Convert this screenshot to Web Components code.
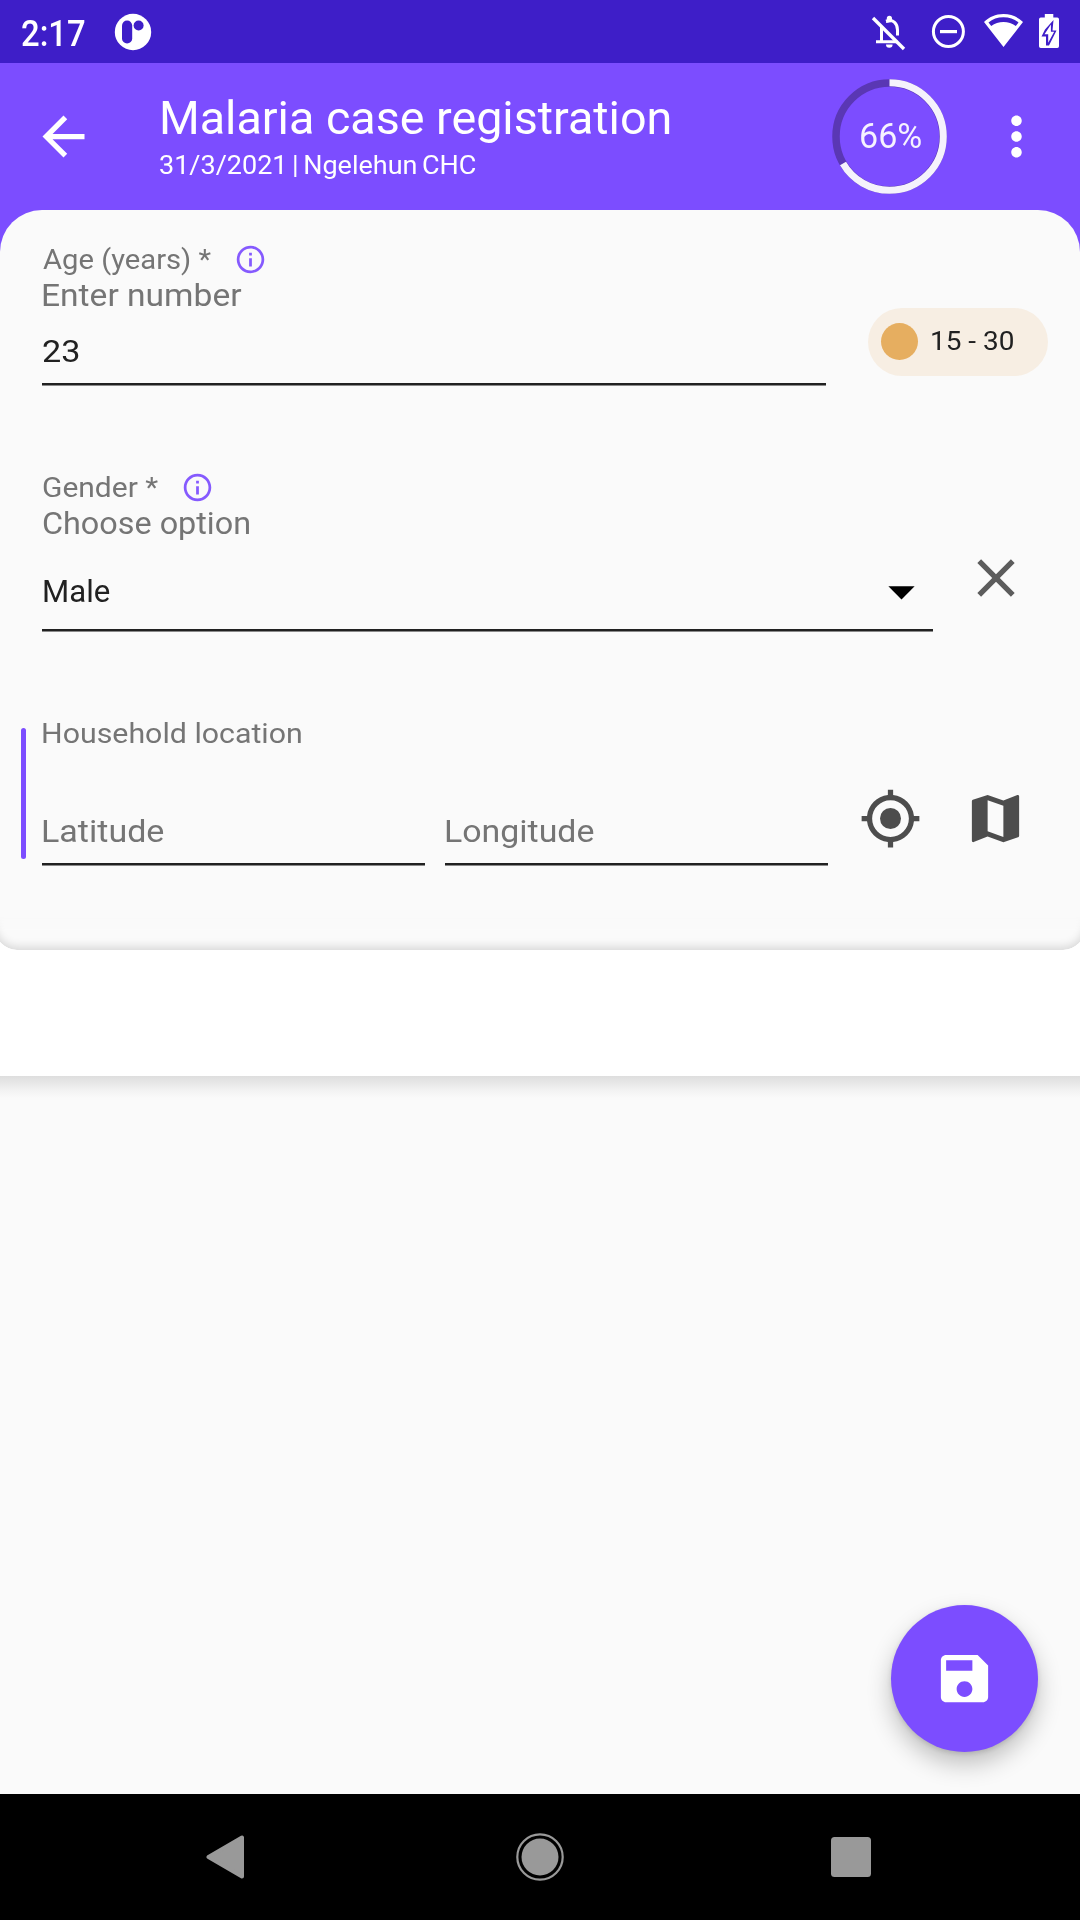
<!DOCTYPE html>
<html lang="en">
<head>
<meta charset="utf-8">
<title>Malaria case registration</title>
<style>
html,body{margin:0;height:100%}
body{font-family:Roboto,"Liberation Sans",sans-serif;color:#212121;background:#fafafa;overflow:hidden}
</style>
</head>
<body>
<capture-app></capture-app>
<script>
const define = (name, markup, setup) => {
  const tpl = document.createElement('template');
  tpl.innerHTML = markup;
  customElements.define(name, class extends HTMLElement {
    connectedCallback() {
      if (this.shadowRoot) return;
      this.attachShadow({mode: 'open'}).append(tpl.content.cloneNode(true));
      if (setup) setup(this, this.shadowRoot);
    }
  });
};

/* One line of text, widened to a given inked width. */
const ruler = document.createElement('canvas').getContext('2d');
define('tracked-text', `<style>:host{display:block;height:36px;line-height:36px;white-space:pre;flex:none}span{display:inline-block;transform-origin:0 50%}</style><span></span>`,
(host, root) => {
  const text = host.getAttribute('text'), span = root.querySelector('span');
  span.textContent = text;
  const cs = getComputedStyle(host);
  ruler.font = `${cs.fontWeight} ${cs.fontSize} ${cs.fontFamily}`;
  const m = ruler.measureText(text);
  const gap = +(host.getAttribute('word-gap') || 0);
  span.style.wordSpacing = gap + 'px';
  const ink = m.actualBoundingBoxRight + m.actualBoundingBoxLeft + gap * (text.split(' ').length - 1);
  const target = +host.getAttribute('span');
  const k = target / ink;
  span.style.transform = `scaleX(${k.toFixed(4)})`;
  span.style.marginLeft = (m.actualBoundingBoxLeft * k * .7) + 'px';
  host.style.width = target + 'px';
});

const icons = {
  back: '<path d="M20 11H7.83l5.59-5.59L12 4l-8 8 8 8 1.41-1.41L7.83 13H20v-2z"/>',
  more: '<path d="M12 8c1.1 0 2-.9 2-2s-.9-2-2-2-2 .9-2 2 .9 2 2 2zm0 2c-1.1 0-2 .9-2 2s.9 2 2 2 2-.9 2-2-.9-2-2-2zm0 6c-1.1 0-2 .9-2 2s.9 2 2 2 2-.9 2-2-.9-2-2-2z"/>',
  info: '<path d="M11 7h2v2h-2zm0 4h2v6h-2zm1-9C6.48 2 2 6.48 2 12s4.48 10 10 10 10-4.48 10-10S17.52 2 12 2zm0 18c-4.41 0-8-3.59-8-8s3.59-8 8-8 8 3.59 8 8-3.59 8-8 8z"/>',
  clear: '<path d="M19 6.41L17.59 5 12 10.59 6.41 5 5 6.41 10.59 12 5 17.59 6.41 19 12 13.41 17.59 19 19 17.59 13.41 12z"/>',
  drop: '<path d="M7 10l5 5 5-5z"/>',
  locate: '<path fill-rule="evenodd" d="M20.94 11c-.46-4.17-3.77-7.48-7.94-7.94V1h-2v2.06C6.83 3.52 3.52 6.83 3.06 11H1v2h2.06c.46 4.17 3.77 7.48 7.94 7.94V23h2v-2.06c4.17-.46 7.48-3.77 7.94-7.94H23v-2h-2.06zM12 19c-3.87 0-7-3.13-7-7s3.13-7 7-7 7 3.13 7 7-3.13 7-7 7z"/><circle cx="12" cy="12" r="4"/>',
  map: '<path d="M20.5 3l-.16.03L15 5.1 9 3 3.36 4.9c-.21.07-.36.25-.36.48V20.5c0 .28.22.5.5.5l.16-.03L9 18.9l6 2.1 5.64-1.9c.21-.07.36-.25.36-.48V3.5c0-.28-.22-.5-.5-.5zM15 19l-6-2.11V5l6 2.11V19z"/>',
  save: '<path fill-rule="evenodd" d="M17 3H5c-1.11 0-2 .9-2 2v14c0 1.1.89 2 2 2h14c1.1 0 2-.9 2-2V7l-4-4zm-5 16c-1.66 0-3-1.34-3-3s1.34-3 3-3 3 1.340 3 3-1.340 3-3 3zm3-10H5V5h10v4z"/>'
};
define('md-icon', `<style>:host{display:block;flex:none;width:63px;height:63px}svg{display:block;width:100%;height:100%;fill:currentColor}</style><svg viewBox="0 0 24 24"></svg>`,
(host, root) => { root.querySelector('svg').innerHTML = icons[host.getAttribute('name')]; });

define('status-bar', `<style>
:host{display:flex;height:63px;background:#3e1ec8;color:#fff;align-items:center;box-sizing:border-box;padding:0 21px 0 22px}
tracked-text{font-size:36.5px;font-weight:500;margin-top:4px}
svg{display:block;flex:none;fill:#fff}
.app{margin-left:29px}.gap{flex:1}
</style>
<tracked-text text="2:17" span="63"></tracked-text>
<svg class="app" width="38" height="38" viewBox="114 12.5 38 38"><circle cx="133" cy="31.5" r="18.2"/><rect x="122" y="20" width="10.2" height="23" rx="5.1" fill="#3e1ec8"/><circle cx="138.6" cy="25" r="5" fill="#3e1ec8"/></svg>
<span class="gap"></span>
<svg width="189" height="40" viewBox="870 12 189 40">
<g fill="none" stroke="#fff" stroke-width="3"><path d="M873 18l31 31" stroke-width="3.3"/><path d="M881.5 26.5V42M876 41.8h21.5"/><path d="M886 21.2C893.5 18.5 897.5 24 897.5 30v5.5"/></g>
<path d="M886.8 20v-1.6a2.6 2.6 0 0 1 5.2 0V22l-6 1zM886 44.5h6.6a3.3 3.3 0 0 1-6.6 0z"/>
<circle cx="948.4" cy="31.5" r="15" fill="none" stroke="#fff" stroke-width="3"/><path d="M940 30h17v3.2h-17z"/>
<path fill-rule="evenodd" d="M1003.5 14C995.5 14 989 17 984 22l19.5 25L1023 22c-5-5-11.5-8-19.5-8zm0 3.2c6 0 11 1.8 15 5.3l-2.7 3.6c-3.6-2.7-7.7-4.1-12.3-4.1s-8.7 1.4-12.3 4.1l-2.7-3.6c4-3.5 9-5.300 15-5.300z"/>
<path fill-rule="evenodd" d="M1044.8 14h8.5v3.5h4a1.8 1.8 0 0 1 1.7 1.7v27a1.8 1.8 0 0 1-1.7 1.8h-16.5a1.8 1.8 0 0 1-1.8-1.8v-27a1.8 1.8 0 0 1 1.8-1.7h4zM1053.5 20l-8.5 9.5-3.5 7h4.5v9h3l7.500-15h-4z"/>
<path d="M1050.9 24.5v7.3h3.3l-6 11v-8.5h-3.700z"/>
</svg>`);

define('progress-ring', `<style>
:host{display:grid;width:116px;height:116px;flex:none;place-items:center}
svg,tracked-text{grid-area:1/1}svg{display:block}
tracked-text{font-size:34.5px;font-weight:400;color:#f6f2ff;margin-top:-2px}
circle{fill:none}
</style>
<svg width="116" height="116" viewBox="0 0 116 116"><circle cx="57.5" cy="57.5" r="53.5" stroke="#5a37b4" stroke-width="7.5"/>
<circle cx="57.5" cy="57.5" r="53.8" stroke="#f5f2fc" stroke-width="7" pathLength="100" stroke-dasharray="66.6 33.4" transform="rotate(-90 57.5 57.5)"/></svg>
<tracked-text text="66%" span="60"></tracked-text>`);

define('app-header', `<style>
:host{display:flex;height:147px;background:#7c4dff;color:#fff;align-items:center;box-sizing:border-box;padding:0 32px}
.titles{margin-left:65px;flex:1;align-self:stretch;padding-top:27px}
.t{font-size:45.5px;height:58px;line-height:58px;margin-left:1px}
.s{font-size:25px;height:30px;line-height:30px;margin-top:3px}
progress-ring{margin-right:37px}
</style>
<md-icon name="back"></md-icon>
<div class="titles"><tracked-text class="t" text="Malaria case registration" span="508"></tracked-text>
<tracked-text class="s" text="31/3/2021 | Ngelehun CHC" span="316" word-gap="-2"></tracked-text></div>
<progress-ring></progress-ring><md-icon name="more"></md-icon>`);

/* Label, optional hint, then whatever the field holds. */
define('form-field', `<style>
:host{display:block;color:#757575}
.label{display:flex;align-items:center;font-size:28px;height:36px;padding-left:1px}
.label tracked-text{margin-top:2px}
.label md-icon{width:33px;height:33px;color:#7c4dff;opacity:.92}
.hint{font-size:30.5px;margin:1px 0 0 1px}
</style><div class="label"></div><slot></slot>`,
(host, root) => {
  const label = root.querySelector('.label');
  const text = (t, w) => { const e = document.createElement('tracked-text'); e.setAttribute('text', t); e.setAttribute('span', w); return e; };
  label.append(text(host.getAttribute('label'), host.getAttribute('label-span')));
  if (host.hasAttribute('hint')) {
    const i = document.createElement('md-icon');
    i.setAttribute('name', 'info');
    i.style.marginLeft = '22.5px';
    label.append(i);
    const h = text(host.getAttribute('hint'), host.getAttribute('hint-span'));
    h.className = 'hint';
    label.after(h);
  }
});

define('text-line', `<style>
:host{display:flex;flex-direction:column;box-sizing:border-box;font-size:30.5px}
.row{display:flex;align-items:center;justify-content:space-between;height:36px;padding:0 0 0 1px}
.rule{height:2px;background:#212121;border-bottom:1px solid #8a8a8a;margin-top:var(--drop,13px)}
</style><div class="row"><slot></slot></div><div class="rule"></div>`,
(host, root) => {
  const t = document.createElement('tracked-text');
  t.setAttribute('text', host.getAttribute('text'));
  t.setAttribute('span', host.getAttribute('span'));
  root.querySelector('.row').prepend(t);
});
define('legend-chip', `<style>
:host{display:flex;align-items:center;width:180px;height:68px;border-radius:34px;background:#f7eee3;box-sizing:border-box;padding:0 0 1px 13px;font-size:25px;color:#212121}
i{width:37px;height:37px;border-radius:50%;background:#e6ae60;margin:0 14px 0 0}
tracked-text{margin-top:1px}
</style><i></i><tracked-text text="15 - 30" span="81"></tracked-text>`);

define('form-card', `<style>
:host{display:block;height:740px;overflow:hidden;background:linear-gradient(#7c4dff 50%,#fff 50%)}
.sheet{height:100%;box-sizing:border-box;border-radius:42px 42px 0 0;background:linear-gradient(#fafafa 724px,transparent 724px);display:grid}
.sheet>*{grid-area:1/1}
.edge{margin:0 -5px;border-radius:0 0 22px 22px;background:#fafafa;overflow:hidden;mask-image:linear-gradient(transparent 706px,#000 722px)}
.edge::after{content:"";display:block;height:100%;border-radius:0 0 22px 22px;box-shadow:inset 0 -3px 10px rgba(0,0,0,.14)}
.body{padding:31px 0 0 42px;position:relative}
</style>
<div class="sheet"><div class="edge"></div><div class="body"><slot></slot></div></div>`);

define('nav-bar', `<style>:host{display:flex;height:126px;background:#000;align-items:center;box-sizing:border-box;padding:0 206px;justify-content:space-between}svg{display:block;fill:#999}</style>
<svg width="41" height="50" viewBox="0 0 41 50"><path d="M2.5 25L36 5.5V44.5z" stroke="#999" stroke-width="4" stroke-linejoin="round"/></svg>
<svg width="50" height="50" viewBox="0 0 50 50" style="margin-left:2px"><circle cx="25" cy="25" r="18.5"/><circle cx="25" cy="25" r="22.7" fill="none" stroke="#999" stroke-width="2.2"/></svg>
<svg width="43" height="50" viewBox="0 0 43 50"><rect x="0" y="5" width="40" height="40" rx="3.5"/></svg>`);

define('save-button', `<style>:host{display:grid;place-items:center;width:147px;height:147px;border-radius:50%;background:#7c4dff;color:#fff;box-shadow:0 12px 24px rgba(0,0,0,.24),0 2px 5px rgba(0,0,0,.12)}</style><md-icon name="save"></md-icon>`);

define('capture-app', `<style>
:host{display:flex;flex-direction:column;width:1080px;height:1920px;background:#fafafa}
.age,.gender,.place{display:flex;align-items:flex-start}
.age{height:228px}.age form-field{width:784px}.age text-line{margin-top:20px}
legend-chip{margin:67px 0 0 42px}
.gender{height:246px}.gender form-field{width:891px}.gender text-line{margin-top:32px;--drop:19px}
.gender md-icon[name=clear]{margin:77px 0 0 30.5px;color:#5c5c5c;width:64px;height:64px}
.gender md-icon[name=drop]{color:#000;margin-top:-2px}
.ink{color:#212121}
.place{margin-left:-21px}
.mark{width:5px;height:131px;border-radius:3px;background:#7c4dff;margin:13px 16px 0 0}
.pair{display:flex;gap:20px;margin-top:63px}.pair text-line{width:383px;--drop:13px}
.place md-icon{color:#4d4d4d;margin:72px 0 0 31px}.place md-icon+md-icon{margin-left:42px}
.blank{height:126px;background:#fff}
.rest{flex:1;display:flex;align-items:flex-end;justify-content:flex-end;padding:0 42px 42px 0;background:linear-gradient(#dedede,#e6e6e6 6px,#f2f2f2 14px,#fafafa 22px)}
</style>
<status-bar></status-bar>
<app-header></app-header>
<form-card>
<div class="age"><form-field label="Age (years) *" label-span="168" hint="Enter number" hint-span="198"><text-line class="ink" text="23" span="36"></text-line></form-field><legend-chip></legend-chip></div>
<div class="gender"><form-field label="Gender *" label-span="115" hint="Choose option" hint-span="206"><text-line class="ink" text="Male" span="66"><md-icon name="drop"></md-icon></text-line></form-field><md-icon name="clear"></md-icon></div>
<div class="place"><div class="mark"></div><form-field label="Household location" label-span="258"><div class="pair"><text-line text="Latitude" span="121"></text-line><text-line text="Longitude" span="148"></text-line></div></form-field><md-icon name="locate"></md-icon><md-icon name="map"></md-icon></div>
</form-card>
<div class="blank"></div>
<div class="rest"><save-button></save-button></div>
<nav-bar></nav-bar>`);
</script>
</body>
</html>
